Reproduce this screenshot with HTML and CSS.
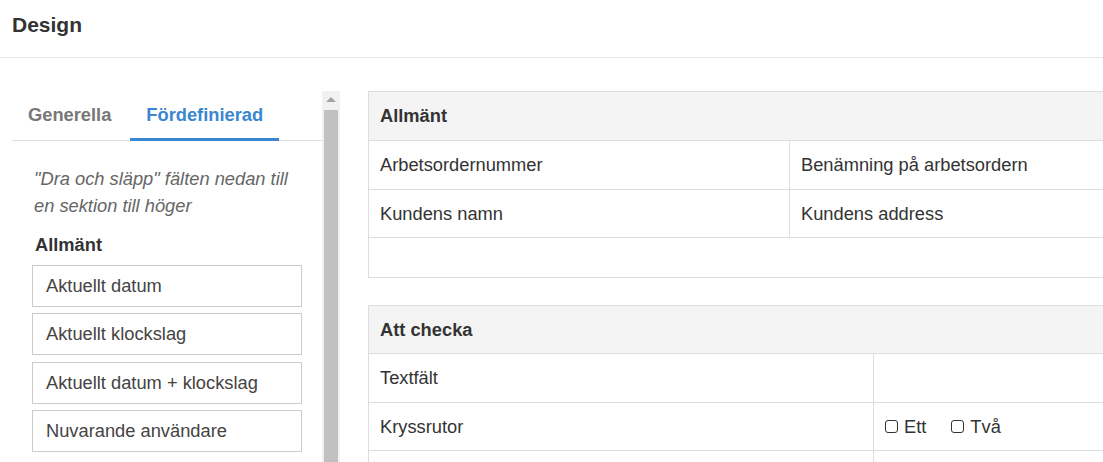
FILE: index.html
```html
<!DOCTYPE html>
<html lang="sv">
<head>
<meta charset="utf-8">
<title>Design</title>
<link rel="stylesheet" href="styles.css">
</head>
<body>
<header class="topbar"><h1 class="title">Design</h1></header>
<main class="main">
  <aside class="sidebar">
    <div class="side-content">
      <nav class="tabs">
        <span class="tab">Generella</span>
        <span class="tab active">Fördefinierad</span>
      </nav>
      <div class="side-body">
        <p class="hint">"Dra och släpp" fälten nedan till en sektion till höger</p>
        <h3 class="group">Allmänt</h3>
        <div class="field">Aktuellt datum</div>
        <div class="field">Aktuellt klockslag</div>
        <div class="field">Aktuellt datum + klockslag</div>
        <div class="field">Nuvarande användare</div>
      </div>
    </div>
    <div class="scrollbar">
      <div class="arrow"></div>
      <div class="thumb"></div>
    </div>
  </aside>
  <section class="canvas">
    <div class="sec">
      <div class="sec-head">Allmänt</div>
      <div class="row half"><div class="cell">Arbetsordernummer</div><div class="cell">Benämning på arbetsordern</div></div>
      <div class="row half"><div class="cell">Kundens namn</div><div class="cell">Kundens address</div></div>
      <div class="row empty"></div>
    </div>
    <div class="sec">
      <div class="sec-head">Att checka</div>
      <div class="row sixty"><div class="cell">Textfält</div><div class="cell"></div></div>
      <div class="row sixty"><div class="cell">Kryssrutor</div><div class="cell"><span class="chk"><i class="box"></i>Ett</span><span class="chk"><i class="box"></i>Två</span></div></div>
      <div class="row sixty"><div class="cell"></div><div class="cell"></div></div>
    </div>
  </section>
</main>
</body>
</html>
```
FILE: styles.css
```css
* { box-sizing: border-box; }
html, body { margin: 0; height: 100%; overflow: hidden; }
body {
  font-family: "Liberation Sans", Arial, sans-serif;
  color: #333;
  background: #fff;
  font-size: 18.3px;
}
.topbar {
  height: 58px;
  border-bottom: 1px solid #e8e8e8;
  padding: 0 12px;
  display: flex;
  align-items: center;
}
.title {
  margin: 0;
  font-size: 21px;
  font-weight: bold;
  color: #333;
  padding-bottom: 8px;
}
.main {
  display: flex;
  gap: 28px;
  padding: 33px 0 0 12px;
  height: calc(100% - 58px);
}
.sidebar {
  display: flex;
  width: 328px;
  flex: none;
  height: 100%;
}
.side-content { width: 310px; }
.tabs {
  display: flex;
  height: 50px;
  border-bottom: 1px solid #ddd;
  gap: 3px;
}
.tab {
  padding: 0 16px;
  font-weight: bold;
  color: #777;
  line-height: 47px;
  border-bottom: 3px solid transparent;
  margin-bottom: -1px;
}
.tab.active {
  color: #3a87d0;
  border-bottom-color: #3a87d0;
}
.side-body { padding: 24px 20px 0 20px; }
.hint {
  margin: 0;
  font-style: italic;
  color: #666;
  line-height: 27px;
  padding-left: 2px;
}
.group {
  margin: 13px 0 7px;
  font-size: 18.3px;
  line-height: 26px;
  font-weight: bold;
  padding-left: 3px;
}
.field {
  height: 42px;
  border: 1px solid #ccc;
  padding: 0 13px;
  line-height: 40px;
  margin-bottom: 6.4px;
  color: #444;
}
.scrollbar {
  width: 18px;
  background: #f1f1f1;
  display: flex;
  flex-direction: column;
  align-items: center;
}
.arrow {
  margin-top: 6px;
  width: 0;
  height: 0;
  border-left: 5px solid transparent;
  border-right: 5px solid transparent;
  border-bottom: 5px solid #a3a3a3;
}
.thumb {
  margin-top: 8px;
  width: 14px;
  flex: 1;
  background: #c1c1c1;
}
.canvas {
  width: 842px;
  flex: none;
}
.sec {
  border: 1px solid #ddd;
  margin-bottom: 27px;
}
.sec-head {
  height: 48px;
  background: #f4f4f4;
  font-weight: bold;
  padding: 0 11px;
  line-height: 48px;
}
.sec + .sec .sec-head { height: 47px; line-height: 47px; }
.row {
  display: grid;
  border-top: 1px solid #ddd;
  height: 48.5px;
}
.row.half { grid-template-columns: 420px 1fr; }
.row.sixty { grid-template-columns: 504px 1fr; }
.row.empty { height: 40px; }
.cell {
  padding: 0 11px;
  line-height: 47px;
}
.cell + .cell { border-left: 1px solid #ddd; }
.chk {
  display: inline-flex;
  align-items: center;
  margin-right: 25px;
}
.box {
  display: inline-block;
  width: 13px;
  height: 13px;
  border: 1.5px solid #333;
  border-radius: 3px;
  margin-right: 6px;
}
```
